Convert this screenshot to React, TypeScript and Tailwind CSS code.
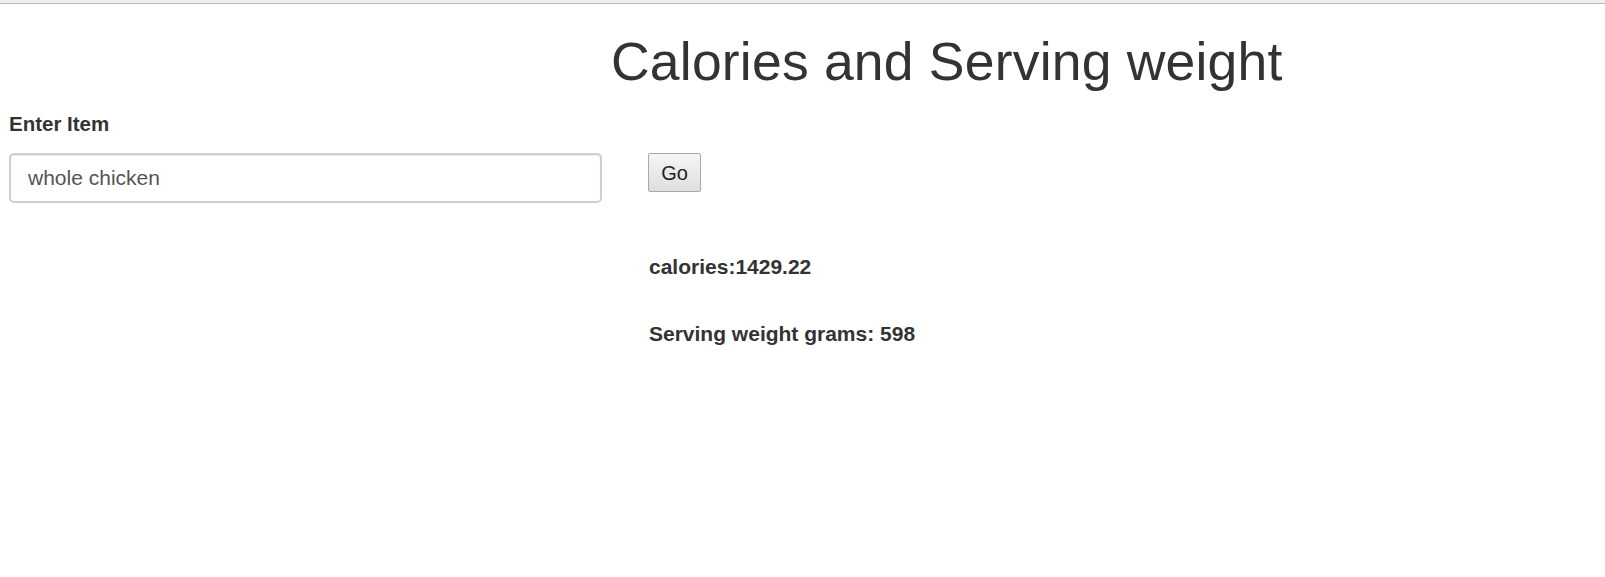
import React, { useState } from 'react';

const font = "font-['Liberation_Sans',Arial,sans-serif]";

export default function App() {
  const [item, setItem] = useState('whole chicken');

  return (
    <div className={`min-h-[577px] bg-white text-[#333] ${font}`}>
      <div className="h-[4px] bg-[#f0f0f0] border-b border-[#b9b9b9]" />

      <h1 className="mt-[30px] pl-[611px] text-[53.5px] leading-[56px] font-normal tracking-[0.2px]">
        Calories and Serving weight
      </h1>

      <div className="mt-[20px] pl-[9px] grid grid-cols-[593px_auto] gap-x-[46px]">
        <label className="text-[20.5px] leading-[28px] font-bold">Enter Item</label>
        <div />

        <input
          value={item}
          onChange={e => setItem(e.target.value)}
          className="mt-[15px] h-[50px] w-full rounded-[5px] border-2 border-[#cfcfcf] pl-[17px] text-[21px] text-[#555] outline-none shadow-[inset_0_1px_1px_rgba(0,0,0,0.075)]"
        />
        <div className="mt-[15px]">
          <button className="h-[39px] w-[53px] border border-[#a9a9a9] bg-gradient-to-b from-[#f6f6f6] to-[#dedede] text-[20px] text-[#222] rounded-[2px]">
            Go
          </button>
        </div>

        <div />
        <div className="pl-[1px] text-[21px] leading-[28px] font-bold">
          <p className="mt-[50px]">calories:1429.22</p>
          <p className="mt-[39px]">Serving weight grams: 598</p>
        </div>
      </div>
    </div>
  );
}
